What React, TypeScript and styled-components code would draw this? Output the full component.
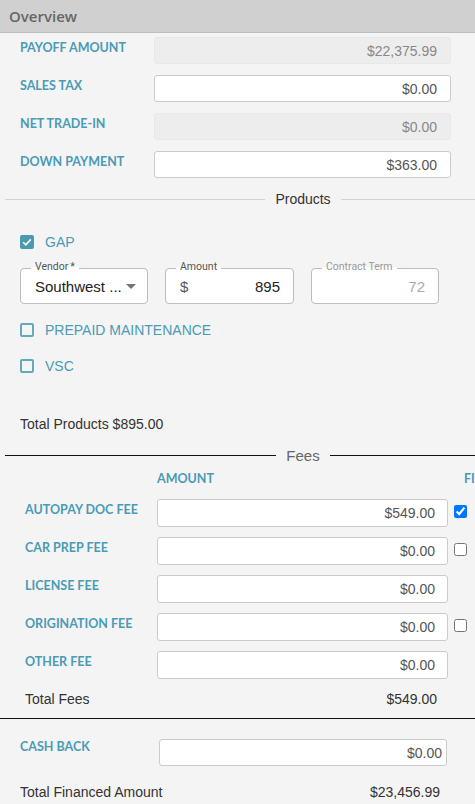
import React from "react";
import styled, { createGlobalStyle } from "styled-components";

const TEAL = "#4a9bb5";

const GlobalStyle = createGlobalStyle`
  html, body {
    margin: 0;
    padding: 0;
    background: #f4f4f4;
    overflow-x: hidden;
  }
  * {
    box-sizing: border-box;
  }
`;

// Layout

const Page = styled.div`
  width: 475px;
  min-height: 804px;
  overflow: hidden;
  background: #f4f4f4;
  font-family: "Liberation Sans", Arial, sans-serif;
  color: #333;
`;

const Header = styled.div`
  height: 33px;
  padding-left: 9px;
  display: flex;
  align-items: center;
  background: #d0d0d0;
  border-bottom: 1px solid #bdbdbd;
  font-family: "Open Sans", sans-serif;
  font-weight: 600;
  font-size: 15px;
  color: #666;
`;

const FormGrid = styled.div<{ $cols: string; $top?: number; $left: number }>`
  display: grid;
  grid-template-columns: ${(p) => p.$cols};
  row-gap: 11px;
  padding-left: ${(p) => p.$left}px;
  margin-top: ${(p) => p.$top ?? 0}px;
`;

const FeeGrid = styled(FormGrid)`
  row-gap: 10px;
`;

const FieldLabel = styled.div<{ $offset?: number }>`
  font-family: Lato, "Open Sans", sans-serif;
  font-weight: 700;
  font-size: 12.5px;
  line-height: 16px;
  padding-top: ${(p) => p.$offset ?? 3}px;
  color: ${TEAL};
  text-transform: uppercase;
  white-space: nowrap;
`;

const ColumnHead = styled(FieldLabel)<{ $indent?: number }>`
  padding-top: 0;
  padding-left: ${(p) => p.$indent ?? 0}px;
`;

const MoneyInput = styled.input<{ $pad?: number; $h?: number }>`
  width: 100%;
  height: ${(p) => p.$h ?? 27}px;
  padding: 0 ${(p) => p.$pad ?? 13}px 0 8px;
  border: 1px solid #cbcbcb;
  border-radius: 3px;
  background: #fff;
  font-family: "Liberation Sans", Arial, sans-serif;
  font-size: 14px;
  color: #555;
  text-align: right;
  outline: none;

  &:read-only[data-locked="true"] {
    background: #ededed;
    border-color: #e8e8e8;
    color: #888;
  }
`;

const Divider = styled.div<{ $line: string; $color: string; $size: number; $top: number }>`
  width: 596px;
  height: 18px;
  margin: ${(p) => p.$top}px 0 0 5px;
  display: flex;
  align-items: center;
  gap: 10px;
  font-size: ${(p) => p.$size}px;
  color: ${(p) => p.$color};

  &::before,
  &::after {
    content: "";
    flex: 1;
    border-top: 1px solid ${(p) => p.$line};
  }
`;

// Products

const ProductList = styled.div`
  padding-left: 20px;
`;

const CheckRow = styled.div<{ $top: number }>`
  height: 16px;
  margin-top: ${(p) => p.$top}px;
  display: flex;
  align-items: center;
  gap: 11px;
  font-size: 14px;
  color: ${TEAL};
`;

const Box = styled.span<{ $checked?: boolean }>`
  width: 14px;
  height: 14px;
  border-radius: 2px;
  display: inline-flex;
  align-items: center;
  justify-content: center;
  background: ${(p) => (p.$checked ? "#4a9bb0" : "transparent")};
  border: ${(p) => (p.$checked ? "none" : "2px solid #65a9be")};
`;

const OutlinedRow = styled.div`
  margin-top: 18px;
  display: flex;
  gap: 17px;
`;

const Outlined = styled.div<{ $w: number }>`
  position: relative;
  width: ${(p) => p.$w}px;
  height: 36px;
  padding: 0 13px 0 14px;
  display: flex;
  align-items: center;
  justify-content: space-between;
  background: #fff;
  border: 1px solid #bdbdbd;
  border-radius: 4px;
  font-size: 15px;
  color: #222;
`;

const Floating = styled.span<{ $muted?: boolean }>`
  position: absolute;
  top: -8px;
  left: 10px;
  padding: 0 4px;
  font-family: Roboto, "Liberation Sans", sans-serif;
  font-size: 10.5px;
  line-height: 12px;
  color: ${(p) => (p.$muted ? "#9a9a9a" : "#555")};
  background: linear-gradient(#f4f4f4 50%, #fff 50%);
`;

const Sup = styled.span`
  margin-left: 2px;
`;

const Prefix = styled.span`
  color: #555;
`;

const Muted = styled.span`
  margin-left: auto;
  color: #aaa;
`;

const Caret = styled.span`
  width: 0;
  height: 0;
  margin-right: -2px;
  border-left: 5px solid transparent;
  border-right: 5px solid transparent;
  border-top: 5px solid #757575;
`;

const TotalLine = styled.div<{ $top: number; $left: number }>`
  margin-top: ${(p) => p.$top}px;
  padding-left: ${(p) => p.$left}px;
  font-size: 14px;
  line-height: 18px;
  color: #333;
`;

// Fees

const FinanceCheck = styled.input`
  width: 13px;
  height: 13px;
  margin: 6px 0 0 6px;
`;

const TotalRow = styled.div<{ $top: number; $left: number; $end: number }>`
  width: ${(p) => p.$end}px;
  margin-top: ${(p) => p.$top}px;
  padding-left: ${(p) => p.$left}px;
  display: flex;
  justify-content: space-between;
  font-size: 14px;
  line-height: 18px;
  color: #333;
  white-space: nowrap;
`;

const Rule = styled.hr`
  margin: 10px 0 0 0;
  border: none;
  border-top: 1px solid #111;
`;

const Check = () => (
  <svg width="12" height="12" viewBox="0 0 12 12">
    <path d="M2.2 6.2 L4.8 8.8 L9.8 3.4" fill="none" stroke="#fff" strokeWidth="1.6" />
  </svg>
);

const overview = [
  { label: "Payoff Amount", value: "$22,375.99", locked: true },
  { label: "Sales Tax", value: "$0.00", locked: false },
  { label: "Net Trade-In", value: "$0.00", locked: true },
  { label: "Down Payment", value: "$363.00", locked: false },
];

const fees: { label: string; value: string; financed?: boolean }[] = [
  { label: "Autopay Doc Fee", value: "$549.00", financed: true },
  { label: "Car Prep Fee", value: "$0.00", financed: false },
  { label: "License Fee", value: "$0.00" },
  { label: "Origination Fee", value: "$0.00", financed: false },
  { label: "Other Fee", value: "$0.00" },
];

const FEE_COLS = "132px 291px auto";

export default function App() {
  return (
    <Page>
      <GlobalStyle />
      <Header>Overview</Header>

      <FormGrid $cols="134px 297px" $left={20} $top={4}>
        {overview.map((row) => (
          <React.Fragment key={row.label}>
            <FieldLabel>{row.label}</FieldLabel>
            <MoneyInput readOnly data-locked={row.locked} defaultValue={row.value} />
          </React.Fragment>
        ))}
      </FormGrid>

      <Divider $line="#d2d2d2" $color="#333" $size={14} $top={12}>
        Products
      </Divider>

      <ProductList>
        <CheckRow $top={26}>
          <Box $checked>
            <Check />
          </Box>
          GAP
        </CheckRow>

        <OutlinedRow>
          <Outlined $w={128}>
            <Floating>
              Vendor<Sup>*</Sup>
            </Floating>
            <span>Southwest ...</span>
            <Caret />
          </Outlined>
          <Outlined $w={129}>
            <Floating>Amount</Floating>
            <Prefix>$</Prefix>
            <span>895</span>
          </Outlined>
          <Outlined $w={128}>
            <Floating $muted>Contract Term</Floating>
            <Muted>72</Muted>
          </Outlined>
        </OutlinedRow>

        <CheckRow $top={18}>
          <Box />
          PREPAID MAINTENANCE
        </CheckRow>
        <CheckRow $top={20}>
          <Box />
          VSC
        </CheckRow>
      </ProductList>

      <TotalLine $top={41} $left={20}>
        Total Products $895.00
      </TotalLine>

      <Divider $line="#111" $color="#666" $size={15} $top={13}>
        Fees
      </Divider>

      <FeeGrid $cols={FEE_COLS} $left={25} $top={7}>
        <span />
        <ColumnHead>Amount</ColumnHead>
        <ColumnHead $indent={16}>Financed</ColumnHead>
      </FeeGrid>

      <FeeGrid $cols={FEE_COLS} $left={25} $top={12}>
        {fees.map((fee) => (
          <React.Fragment key={fee.label}>
            <FieldLabel>{fee.label}</FieldLabel>
            <MoneyInput readOnly defaultValue={fee.value} $pad={12} $h={28} />
            {fee.financed === undefined ? (
              <span />
            ) : (
              <FinanceCheck type="checkbox" readOnly checked={fee.financed} />
            )}
          </React.Fragment>
        ))}
      </FeeGrid>

      <TotalRow $left={25} $end={437} $top={11}>
        <span>Total Fees</span>
        <span>$549.00</span>
      </TotalRow>

      <Rule />

      <FormGrid $cols="139px 288px" $left={20} $top={20}>
        <FieldLabel $offset={-2}>Cash Back</FieldLabel>
        <MoneyInput readOnly defaultValue="$0.00" $pad={4} />
      </FormGrid>

      <TotalRow $left={20} $end={440} $top={17}>
        <span>Total Financed Amount</span>
        <span>$23,456.99</span>
      </TotalRow>
    </Page>
  );
}
